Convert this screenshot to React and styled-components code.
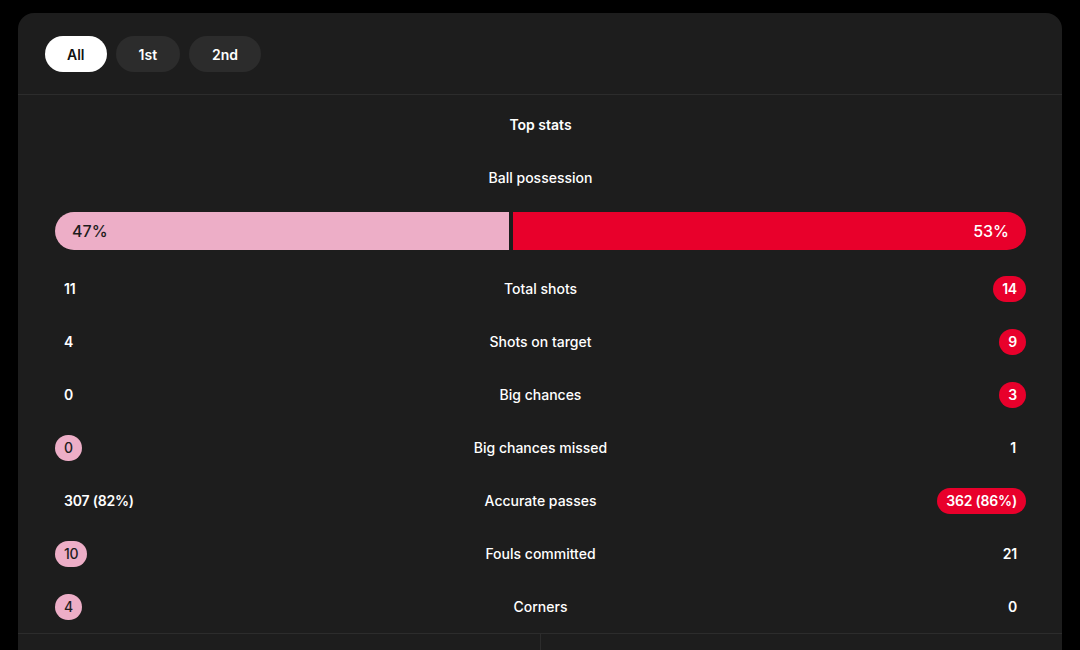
import React from "react";
import styled, { createGlobalStyle } from "styled-components";

const GlobalStyle = createGlobalStyle`
  html, body {
    margin: 0;
    padding: 0;
    background: #000;
    font-family: Inter, "Noto Sans", "Liberation Sans", sans-serif;
    color: #fff;
  }
`;

const Page = styled.div`
  padding: 13px 18px 0 18px;
  height: 650px;
  overflow: hidden;
  box-sizing: border-box;
`;

const Card = styled.div`
  background: #1d1d1d;
  border-radius: 16px;
`;

const TabBar = styled.div`
  display: flex;
  gap: 9px;
  padding: 23px 27px 22px;
  border-bottom: 1px solid #2c2c2c;
`;

const Tab = styled.button`
  height: 36px;
  padding: 0 ${(p) => p.$pad}px;
  border: none;
  border-radius: 18px;
  background: ${(p) => (p.$active ? "#fff" : "#2c2c2c")};
  color: ${(p) => (p.$active ? "#111" : "#fff")};
  font-family: inherit;
  font-size: 14px;
  font-weight: 600;
  cursor: pointer;
`;

const Stats = styled.div`
  padding: 19px 36px 0 37px;
`;

const Title = styled.div`
  text-align: center;
  font-size: 14px;
  font-weight: 600;
  line-height: 22px;
`;

const Label = styled.div`
  text-align: center;
  font-size: 14px;
  font-weight: 500;
  line-height: 22px;
  margin-top: 31px;
`;

const Bar = styled.div`
  display: flex;
  gap: 4px;
  height: 38px;
  margin-top: 23px;
  margin-bottom: 12px;
`;

const BarPart = styled.div`
  display: flex;
  align-items: center;
  box-sizing: border-box;
  min-width: 0;
  justify-content: ${(p) => (p.$side === "left" ? "flex-start" : "flex-end")};
  padding: 0 17px;
  font-size: 16px;
  font-weight: 500;
  background: ${(p) => (p.$side === "left" ? "#edaec7" : "#e8002b")};
  color: ${(p) => (p.$side === "left" ? "#1d1d1d" : "#fff")};
  border-radius: ${(p) => (p.$side === "left" ? "19px 0 0 19px" : "0 19px 19px 0")};
  flex: 1 1 0;
`;

const Row = styled.div`
  display: grid;
  grid-template-columns: 1fr auto 1fr;
  align-items: center;
  height: 53px;
`;

const RowLabel = styled.div`
  font-size: 14px;
  font-weight: 500;
  text-align: center;
`;

const Cell = styled.div`
  display: flex;
  justify-content: ${(p) => (p.$side === "left" ? "flex-start" : "flex-end")};
`;

const Value = styled.span`
  display: inline-flex;
  align-items: center;
  justify-content: center;
  min-width: 26px;
  height: 26px;
  box-sizing: border-box;
  padding: 0 9px;
  border-radius: 13px;
  font-size: 14px;
  background: ${(p) =>
    p.$hl === "home" ? "#edaec7" : p.$hl === "away" ? "#e8002b" : "transparent"};
  color: ${(p) => (p.$hl === "home" ? "#1d1d1d" : "#fff")};
  font-weight: ${(p) => (p.$hl === "home" ? 500 : 600)};
  letter-spacing: -0.2px;
`;

const Footer = styled.div`
  display: grid;
  grid-template-columns: 1fr 1fr;
  border-top: 1px solid #2c2c2c;
  height: 80px;
`;

const FooterCol = styled.div`
  border-left: ${(p) => (p.$divider ? "1px solid #2c2c2c" : "none")};
`;

const rows = [
  ["11", "Total shots", "14", "away"],
  ["4", "Shots on target", "9", "away"],
  ["0", "Big chances", "3", "away"],
  ["0", "Big chances missed", "1", "home"],
  ["307 (82%)", "Accurate passes", "362 (86%)", "away"],
  ["10", "Fouls committed", "21", "home"],
  ["4", "Corners", "0", "home"],
];

export default function App() {
  const home = 47;
  return (
    <Page>
      <GlobalStyle />
      <Card>
        <TabBar>
          <Tab $active $pad={22}>All</Tab>
          <Tab $pad={23}>1st</Tab>
          <Tab $pad={23}>2nd</Tab>
        </TabBar>
        <Stats>
          <Title>Top stats</Title>
          <Label>Ball possession</Label>
          <Bar>
            <BarPart $side="left" style={{ flex: `0 0 calc(${home}% - 2px)` }}>
              {home}%
            </BarPart>
            <BarPart $side="right">{100 - home}%</BarPart>
          </Bar>
          {rows.map(([l, label, r, hl]) => (
            <Row key={label}>
              <Cell $side="left">
                <Value $hl={hl === "home" ? "home" : null}>{l}</Value>
              </Cell>
              <RowLabel>{label}</RowLabel>
              <Cell $side="right">
                <Value $hl={hl === "away" ? "away" : null}>{r}</Value>
              </Cell>
            </Row>
          ))}
        </Stats>
        <Footer>
          <FooterCol />
          <FooterCol $divider />
        </Footer>
      </Card>
    </Page>
  );
}
